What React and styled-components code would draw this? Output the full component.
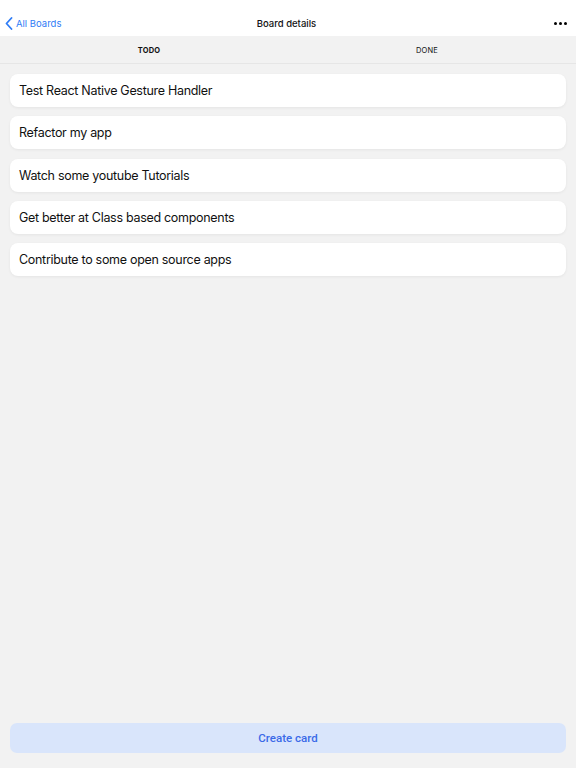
import React, { useState } from "react";
import styled, { createGlobalStyle } from "styled-components";

const GlobalStyle = createGlobalStyle`
    html, body {
        margin: 0;
        padding: 0;
        height: 100%;
    }
    body {
        font-family: Inter, "Noto Sans", "Liberation Sans", sans-serif;
        background: #f2f2f2;
        -webkit-font-smoothing: antialiased;
    }
    #root {
        height: 100%;
    }
`;

const Screen = styled.div`
    height: 768px;
    display: flex;
    flex-direction: column;
    background: #f2f2f2;
`;

// status bar space sits above the nav row, so the row is pushed down
const Header = styled.div`
    height: 36px;
    box-sizing: border-box;
    flex-shrink: 0;
    background: #ffffff;
    display: grid;
    grid-template-columns: 1fr auto 1fr;
    align-items: center;
    padding: 10px 8px 0 5px;
`;

const BackButton = styled.button`
    display: flex;
    align-items: center;
    gap: 3px;
    border: none;
    background: none;
    padding: 0;
    color: #2f7cf6;
    font-family: inherit;
    font-size: 9.5px;
    justify-self: start;
    cursor: pointer;
`;

const Title = styled.div`
    font-size: 9.5px;
    font-weight: 500;
    color: #111;
`;

const MoreButton = styled.button`
    justify-self: end;
    display: flex;
    gap: 2px;
    border: none;
    background: none;
    padding: 4px 1px;
    cursor: pointer;
`;

const Dot = styled.span`
    width: 3px;
    height: 3px;
    border-radius: 50%;
    background: #000;
`;

const TabBar = styled.div`
    height: 27px;
    flex-shrink: 0;
    display: flex;
    padding: 0 10px;
    background: #f2f2f2;
    border-bottom: 1px solid #e6e6e6;
`;

const Tab = styled.button`
    flex: 1;
    border: none;
    background: none;
    font-family: inherit;
    font-size: 7.5px;
    letter-spacing: 0.2px;
    font-weight: ${(p) => (p.$active ? 700 : 400)};
    color: #111;
    padding: 2px 0 0;
    cursor: pointer;
`;

const CardList = styled.div`
    flex: 1;
    display: flex;
    flex-direction: column;
    gap: 9.3px;
    padding: 10px 10px;
`;

const Card = styled.div`
    height: 33px;
    flex-shrink: 0;
    display: flex;
    align-items: center;
    padding: 0 9px;
    background: #ffffff;
    border-radius: 8px;
    box-shadow: 0 1px 3px rgba(0, 0, 0, 0.06);
    font-size: 12.5px;
    letter-spacing: -0.3px;
    color: #111;
`;

const Footer = styled.div`
    padding: 0 10px 15px;
`;

const CreateButton = styled.button`
    width: 100%;
    height: 30px;
    border: none;
    border-radius: 7px;
    background: #d9e5fb;
    color: #3a6ae8;
    font-family: Roboto, Inter, sans-serif;
    font-size: 11.5px;
    font-weight: 500;
    cursor: pointer;
`;

const cards = [
    "Test React Native Gesture Handler",
    "Refactor my app",
    "Watch some youtube Tutorials",
    "Get better at Class based components",
    "Contribute to some open source apps",
];

export default function App() {
    const [tab, setTab] = useState("TODO");

    return (
        <>
            <GlobalStyle />
            <Screen>
                <Header>
                    <BackButton>
                        <svg width="8" height="13" viewBox="0 0 8 13">
                            <path d="M6.5 1 L1.5 6.5 L6.5 12" fill="none" stroke="#2f7cf6" strokeWidth="1.8" strokeLinecap="round" strokeLinejoin="round" />
                        </svg>
                        All Boards
                    </BackButton>
                    <Title>Board details</Title>
                    <MoreButton>
                        <Dot />
                        <Dot />
                        <Dot />
                    </MoreButton>
                </Header>
                <TabBar>
                    {["TODO", "DONE"].map((t) => (
                        <Tab key={t} $active={tab === t} onClick={() => setTab(t)}>
                            {t}
                        </Tab>
                    ))}
                </TabBar>
                <CardList>
                    {cards.map((c) => (
                        <Card key={c}>{c}</Card>
                    ))}
                </CardList>
                <Footer>
                    <CreateButton>Create card</CreateButton>
                </Footer>
            </Screen>
        </>
    );
}
